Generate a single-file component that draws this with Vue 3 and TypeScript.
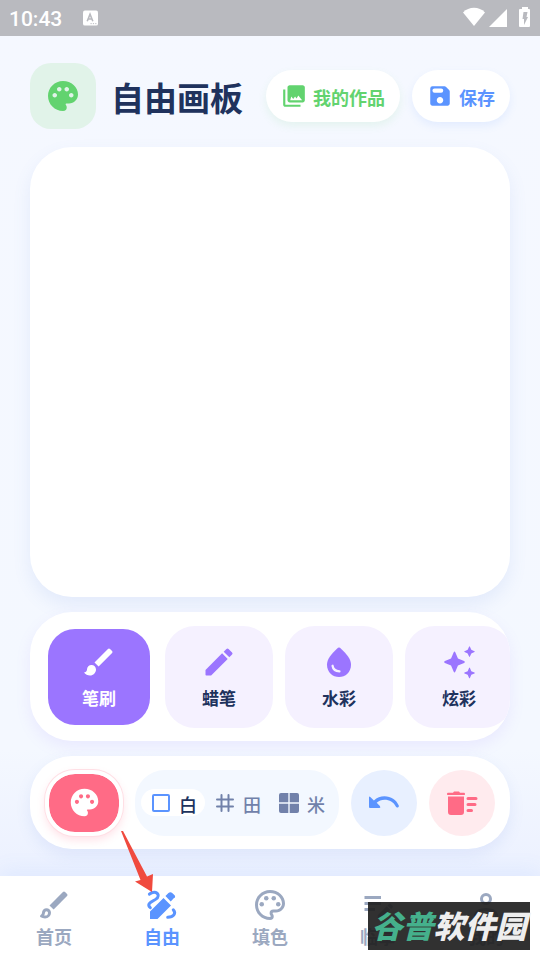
<script setup lang="ts">
import { ref } from 'vue'

interface Brush { name: string; icon: string }
interface Grid { name: string; icon: string }
interface Tab { name: string; icon: string }

const PALETTE = 'M12 2C6.49 2 2 6.49 2 12s4.49 10 10 10a2.5 2.5 0 0 0 2.5-2.5c0-.61-.23-1.2-.64-1.67-.08-.1-.13-.21-.13-.33 0-.28.22-.5.5-.5H16c3.31 0 6-2.69 6-6 0-4.96-4.49-9-10-9zm-5.5 11c-.83 0-1.5-.67-1.5-1.5S5.67 10 6.5 10s1.5.67 1.5 1.5S7.33 13 6.5 13zm3-4C8.67 9 8 8.33 8 7.5S8.67 6 9.5 6s1.5.67 1.5 1.5S10.33 9 9.5 9zm5 0c-.83 0-1.5-.67-1.5-1.5S13.67 6 14.5 6s1.5.67 1.5 1.5S15.33 9 14.5 9zm4.5 2.5c0 .83-.67 1.5-1.5 1.5s-1.5-.67-1.5-1.5.67-1.5 1.5-1.5 1.5.67 1.5 1.5z'
const PALETTE_OUTLINE = 'M12 22C6.49 22 2 17.51 2 12S6.49 2 12 2s10 4.04 10 9c0 3.31-2.69 6-6 6h-1.77c-.28 0-.5.22-.5.5 0 .12.05.23.13.33.41.47.64 1.06.64 1.67A2.5 2.5 0 0 1 12 22zm0-18c-4.41 0-8 3.59-8 8s3.59 8 8 8c.28 0 .5-.22.5-.5a.54.54 0 0 0-.14-.35c-.41-.46-.63-1.05-.63-1.65a2.5 2.5 0 0 1 2.5-2.5H16c2.21 0 4-1.79 4-4 0-3.86-3.59-7-8-7z'

const brushes: Brush[] = [
  { name: '笔刷', icon: 'brush' },
  { name: '蜡笔', icon: 'pencil' },
  { name: '水彩', icon: 'drop' },
  { name: '炫彩', icon: 'spark' },
]
const grids: Grid[] = [
  { name: '白', icon: 'blank' },
  { name: '田', icon: 'hash' },
  { name: '米', icon: 'window' },
]
const tabs: Tab[] = [
  { name: '首页', icon: 'home' },
  { name: '自由', icon: 'draw' },
  { name: '填色', icon: 'fill' },
  { name: '临摹', icon: 'copy' },
  { name: '我的', icon: 'person' },
]
const brush = ref('笔刷')
const grid = ref('白')
const tab = ref('自由')
</script>

<template>
  <div class="screen">
    <header class="status">
      <span class="clock">10:43</span>
      <svg class="ime" viewBox="0 0 16 16" aria-hidden="true">
        <rect width="16" height="16" rx="2" fill="#fff" />
        <path d="M4.500 11.500 7.500 4l3 7.500M5.500 9h4" fill="none" stroke="#b9babf" stroke-width="1.700" />
        <path d="M8 14h1.300M10.500 14h1.300M13 14h1.300" stroke="#b9babf" />
      </svg>
      <span class="grow"></span>
      <svg class="signals" viewBox="0 0 67 22" aria-hidden="true">
        <path d="M0 5.500C6-.7 16-.7 22 5.500L11 19z" />
        <path d="M44 2v18H26z" />
        <path d="M57 2h2V0h6v2h1q1 0 1 1v16q0 1-1 1h-9q-1 0-1-1V3q0-1 1-1z" />
        <path d="M60.500 5h4l-1 5h1.500l-4 8v-6h-1.500z" fill="#b9babf" />
      </svg>
    </header>

    <main class="content">
      <div class="head">
        <span class="badge">
          <svg class="icon" viewBox="0 0 24 24" aria-hidden="true"><path :d="PALETTE" /></svg>
        </span>
        <h1>自由画板</h1>
        <button class="pill works" type="button">
          <svg viewBox="0 0 24 24" aria-hidden="true">
            <path d="M22 16V4c0-1.100-.9-2-2-2H8c-1.100 0-2 .9-2 2v12c0 1.100.9 2 2 2h12c1.100 0 2-.9 2-2zM9.500 12.500l1.800 2.200 1.700-2.200 1.300 1.700L16 11.500l3.500 4.500H8.500zM2 6v14c0 1.100.9 2 2 2h14v-2H4V6H2z" fill-rule="evenodd" />
          </svg>
          <span>我的作品</span>
        </button>
        <button class="pill save" type="button">
          <svg viewBox="0 0 24 24" aria-hidden="true">
            <path d="M17.600 3.600A2 2 0 0 0 16.200 3H5a2 2 0 0 0-2 2v14c0 1.100.9 2 2 2h14c1.100 0 2-.9 2-2V7.800a2 2 0 0 0-.6-1.400zM12 19c-1.660 0-3-1.340-3-3s1.340-3 3-3 3 1.340 3 3-1.340 3-3 3zm1-10H7a2 2 0 0 1 0-4h6a2 2 0 0 1 0 4z" />
          </svg>
          <span>保存</span>
        </button>
      </div>

      <section class="canvas" aria-label="画布"></section>

      <section class="brushes">
        <button
          v-for="b in brushes"
          :key="b.name"
          type="button"
          class="brush"
          :class="{ active: brush === b.name }"
          @click="brush = b.name"
        >
          <svg class="icon" viewBox="0 0 24 24" aria-hidden="true">
            <path v-if="b.icon === 'brush'" d="M7 14c-1.660 0-3 1.340-3 3 0 1.310-1.160 2-2 2 .92 1.220 2.490 2 4 2 2.210 0 4-1.790 4-4 0-1.660-1.340-3-3-3zm13.710-9.370-1.340-1.340a1 1 0 0 0-1.410 0L9 12.250 11.750 15l8.960-8.960a1 1 0 0 0 0-1.410z" />
            <path v-else-if="b.icon === 'pencil'" d="M3 17.250V20.500q0 .5.5.5H6.750L17.810 9.940 14.060 6.190zM20.710 7.040a1 1 0 0 0 0-1.410l-2.340-2.340a1 1 0 0 0-1.410 0l-1.830 1.830 3.750 3.750z" />
            <template v-else-if="b.icon === 'drop'">
              <path d="M12.660 2.580a1 1 0 0 0-1.320 0C6.450 6.880 4 10.620 4 13.800 4 18.780 7.800 22 12 22s8-3.220 8-8.200c0-3.180-2.450-6.920-7.340-11.220z" />
              <path d="M7.700 14.500Q8.200 18 12.300 18.300" class="shine" />
            </template>
            <template v-else>
              <path d="M8.400 5.600q.6-1.200 1.200 0l1.700 4.100 4.100 1.700q1.200.6 0 1.200l-4.100 1.700-1.700 4.100q-.6 1.200-1.200 0l-1.700-4.100-4.100-1.700q-1.200-.6 0-1.200l4.100-1.700z" />
              <path d="M18.700 1.800q.3-.6.600 0l.9 2.100 2.100.9q.6.300 0 .6l-2.100.9-.9 2.100q-.3.600-.6 0l-.9-2.100-2.100-.9q-.6-.3 0-.6l2.100-.9z" />
              <path d="M18.700 16q.3-.6.600 0l.9 2.100 2.100.9q.6.300 0 .6l-2.100.9-.9 2.100q-.3.600-.6 0l-.9-2.100-2.100-.9q-.6-.3 0-.6l2.100-.9z" />
            </template>
          </svg>
          <span>{{ b.name }}</span>
        </button>
      </section>

      <section class="tools">
        <button class="color" type="button" aria-label="颜色">
          <svg viewBox="0 0 24 24" aria-hidden="true"><path :d="PALETTE" /></svg>
        </button>
        <div class="grids">
          <button
            v-for="g in grids"
            :key="g.name"
            type="button"
            class="grid"
            :class="{ active: grid === g.name }"
            @click="grid = g.name"
          >
            <svg viewBox="0 0 24 24" aria-hidden="true">
              <rect v-if="g.icon === 'blank'" x="4" y="4" width="16" height="16" rx="1" class="stroke" />
              <path v-else-if="g.icon === 'hash'" d="M8.500 4v16M15.500 4v16M4 8.500h16M4 15.500h16" class="stroke" />
              <path v-else d="M2 4q0-2 2-2h7.300v9.300H2zM12.700 2H20q2 0 2 2v7.300h-9.300zM2 12.700h9.300V22H4q-2 0-2-2zM12.700 12.700H22V20q0 2-2 2h-7.300z" />
            </svg>
            <span>{{ g.name }}</span>
          </button>
        </div>
        <button class="round undo" type="button" aria-label="撤销">
          <svg viewBox="0 0 32 32" aria-hidden="true">
            <path d="M1 10.500q0-1.700 1.300-.5L5.900 13.500Q10.500 9.300 16.500 9.300c6.500 0 11.700 3.500 14.300 9.200q.5 1.300-.8 1.900-1.500.5-2.200-.8c-2.200-4.500-6.300-6.800-11.300-6.800-3 0-5.700 1-7.800 3l3.200 3.300q1.200 1.800-.5 2H2q-1 0-1-1z" />
          </svg>
        </button>
        <button class="round clear" type="button" aria-label="清空">
          <svg viewBox="0 0 32 32" aria-hidden="true">
            <path d="M8 4.500h5l1 1.200h4q1 0 1 1.200t-1 1.200H2q-1 0-1-1.200t1-1.200h5zM2 9.500h16V25q0 3-3 3H5q-3 0-3-3zM22 10h8a1.500 1.500 0 0 1 0 3h-8a1.500 1.500 0 0 1 0-3zm0 6h7a1.500 1.500 0 0 1 0 3h-7a1.500 1.500 0 0 1 0-3zm0 6h3.500a1.500 1.500 0 0 1 0 3H22a1.500 1.500 0 0 1 0-3z" />
          </svg>
        </button>
      </section>
    </main>

    <nav class="tabs">
      <a
        v-for="t in tabs"
        :key="t.name"
        href="#"
        class="tab"
        :class="{ active: tab === t.name }"
        @click.prevent="tab = t.name"
      >
        <svg viewBox="0 0 24 24" aria-hidden="true">
          <template v-if="t.icon === 'home'">
            <path d="M20.710 4.630l-1.340-1.340a1 1 0 0 0-1.410 0L9 12.250 11.750 15l8.960-8.960a1 1 0 0 0 0-1.410z" />
            <path d="M7 15.100a2 2 0 0 1 2 2c0 1.700-1.300 2.900-3 2.900-.8 0-1.700-.2-2.300-.6.8-.6 1.300-1.400 1.300-2.300a2 2 0 0 1 2-2z" class="stroke" />
          </template>
          <template v-else-if="t.icon === 'draw'">
            <path d="m17.800 9.200 2.200-2.200c.8.100 1-1.200.4-1.900l-1.600-1.500c-.7-.7-1.800-.6-2.500 0l-2 2zM13 6.900 4 15.900V21h5l9-9z" transform="translate(0 .4)" />
            <path d="M4.200 13.800C2 12 3.800 10.200 6 9.200 8.300 8.200 10 7.200 9.400 5.200 8.600 2.800 5.500 3 3.600 4.800M19.500 15.200c2.200 2.500.2 4.800-3.700 5" class="stroke" />
          </template>
          <template v-else-if="t.icon === 'fill'">
            <path :d="PALETTE_OUTLINE" />
            <circle cx="6.500" cy="11.500" r="1.500" />
            <circle cx="9.500" cy="7.500" r="1.500" />
            <circle cx="14.500" cy="7.500" r="1.500" />
            <circle cx="17.500" cy="11.500" r="1.500" />
          </template>
          <path v-else-if="t.icon === 'copy'" d="M3 6h11v2H3zm0 4h11v2H3zm0 4h7v2H3zm17.500-2.700 1.200 1.200q.6.600 0 1.200l-1 1-2.400-2.400 1-1q.6-.6 1.200 0zm-2.700 1.500 2.400 2.400-6 6h-2.400v-2.400z" />
          <path v-else d="M12 5a3 3 0 1 1 0 6 3 3 0 0 1 0-6zM5 21v-2.500Q6 15 12 15t7 3.500V21z" class="stroke" />
        </svg>
        <span>{{ t.name }}</span>
      </a>
    </nav>

    <svg class="arrow" viewBox="0 0 34 64" aria-hidden="true">
      <path d="M0 1h2L26 46.500 32 44 31 62 14 51.500 19.500 50z" />
    </svg>
    <div class="mark"><span>谷普</span>软件园</div>
  </div>
</template>

<style>
body { margin: 0; background: #f5f8ff; }
</style>

<style scoped>
.screen {
  position: relative;
  min-height: 100vh;
  display: flex;
  flex-direction: column;
  overflow: hidden;
  background: linear-gradient(#f5f8ff 0, #f4f8ff 78%, #ecf1ff 91%);
  font-family: "Noto Sans", "Noto Sans CJK SC", sans-serif;
  color: #20325d;
}
* { box-sizing: border-box; }
svg { display: block; flex: none; fill: currentColor; }
button { font: inherit; color: inherit; border: 0; padding: 0; margin: 0; cursor: pointer; }
.stroke { fill: none; stroke: currentColor; stroke-width: 2; stroke-linecap: round; stroke-linejoin: round; }
.grow { flex: 1; }

.status {
  height: 36px;
  display: flex;
  align-items: center;
  padding: 0 10px 0 9px;
  background: #b9babf;
  color: #fff;
}
.clock { font: 500 21px/36px Roboto, sans-serif; padding-top: 2px; }
.ime { width: 15px; height: 16px; margin-left: 21px; }
.signals { width: 67px; height: 22px; }

.content {
  flex: 1;
  display: flex;
  flex-direction: column;
  gap: 15px;
  padding: 27px 30px;
}
.head { display: flex; align-items: center; height: 66px; margin-bottom: 3px; }
.badge {
  display: grid;
  place-items: center;
  width: 66px;
  height: 66px;
  border-radius: 21px;
  background: #e1f3e9;
  color: #62d36f;
}
.icon { width: 36px; height: 36px; }
h1 {
  flex: 1;
  margin: 0 0 0 15px;
  padding-top: 2px;
  font: 700 33px/48px "Noto Sans CJK SC", sans-serif;
  white-space: nowrap;
}
.pill {
  display: flex;
  align-items: center;
  justify-content: center;
  gap: 6px;
  height: 52px;
  padding: 0 15px;
  border-radius: 26px;
  background: #fff;
  font: 700 18px/26px "Noto Sans CJK SC", sans-serif;
  white-space: nowrap;
}
.pill svg { width: 26px; height: 26px; }
.pill span { padding-top: 1px; }
.works { color: #62d36f; box-shadow: 0 4px 9px #62d36f1c; }
.save { margin-left: 12px; color: #5b94ff; box-shadow: 0 4px 9px #5b94ff1c; }

.canvas {
  flex: 1;
  min-height: 240px;
  border-radius: 42px;
  background: #fff;
  box-shadow: 0 8px 18px #5b84d91c;
}
.brushes {
  display: flex;
  align-items: center;
  gap: 12px;
  height: 129px;
  padding: 0 15px;
  border-radius: 42px;
  overflow: hidden;
  background: #fff;
  box-shadow: 0 6px 15px #9b75ff1c;
}
.brush {
  flex: none;
  display: flex;
  flex-direction: column;
  align-items: center;
  justify-content: center;
  gap: 6px;
  width: 108px;
  height: 102px;
  padding-top: 1px;
  border-radius: 30px;
  background: #f5f1ff;
  color: #9b75ff;
  font: 700 17px/24px "Noto Sans CJK SC", sans-serif;
}
.brush span { color: #20325d; }
.brush.active { width: 102px; height: 96px; margin: 0 3px; border-radius: 27px; background: #9b75ff; color: #fff; }
.brush.active span { color: #fff; }
.shine { fill: none; stroke: #f5f1ff; stroke-width: 1.5; stroke-linecap: round; }

.tools {
  display: flex;
  align-items: center;
  gap: 12px;
  height: 93px;
  padding: 0 15px;
  border-radius: 42px;
  background: #fff;
  box-shadow: 0 6px 15px #5b84d91c;
}
.color {
  display: grid;
  place-items: center;
  width: 78px;
  height: 66px;
  border: 4px solid #fff;
  border-radius: 30px;
  background: #ff6b86;
  background-clip: padding-box;
  color: #fff;
  box-shadow: 0 0 0 1px #ffdfe5, 0 4px 8px #ff6b8633;
}
.color svg { width: 33px; height: 33px; }
.grids {
  flex: 1;
  display: flex;
  align-items: center;
  height: 66px;
  padding: 0 6px;
  border-radius: 30px;
  background: #f3f8ff;
}
.grid {
  flex: 1;
  display: flex;
  align-items: center;
  justify-content: center;
  gap: 6px;
  height: 27px;
  border-radius: 14px;
  background: transparent;
  color: #7181aa;
  font: 500 18px/26px "Noto Sans CJK SC", sans-serif;
}
.grid svg { width: 24px; height: 24px; }
.grid span { padding-top: 2px; }
.grid.active { background: #fff; color: #5b94ff; }
.grid.active span { color: #20325d; }
.round { display: grid; place-items: center; width: 66px; height: 66px; border-radius: 50%; }
.round svg { width: 32px; height: 32px; }
.undo { background: #e8f0ff; color: #5b94ff; }
.clear { background: #ffebee; color: #ff6b86; }

.tabs { display: flex; height: 84px; background: #fff; box-shadow: 0 -6px 20px #5b94ff14; }
.tab {
  flex: 1;
  display: flex;
  flex-direction: column;
  align-items: center;
  padding-top: 11px;
  color: #9ba8c0;
  text-decoration: none;
  font: 700 18px/26px "Noto Sans CJK SC", sans-serif;
}
.tab svg { width: 36px; height: 36px; }
.tab.active { color: #5b94ff; }
.arrow { position: absolute; left: 121px; bottom: 66px; width: 34px; height: 64px; fill: #f04a3e; }
.mark {
  position: absolute;
  right: 10px;
  bottom: 10px;
  width: 162px;
  height: 48px;
  background: #1f1f1fea;
  color: #eee;
  text-align: center;
  font: italic 900 31px/46px "Noto Sans CJK SC", sans-serif;
  white-space: nowrap;
}
.mark span { color: #45b08c; }
</style>
